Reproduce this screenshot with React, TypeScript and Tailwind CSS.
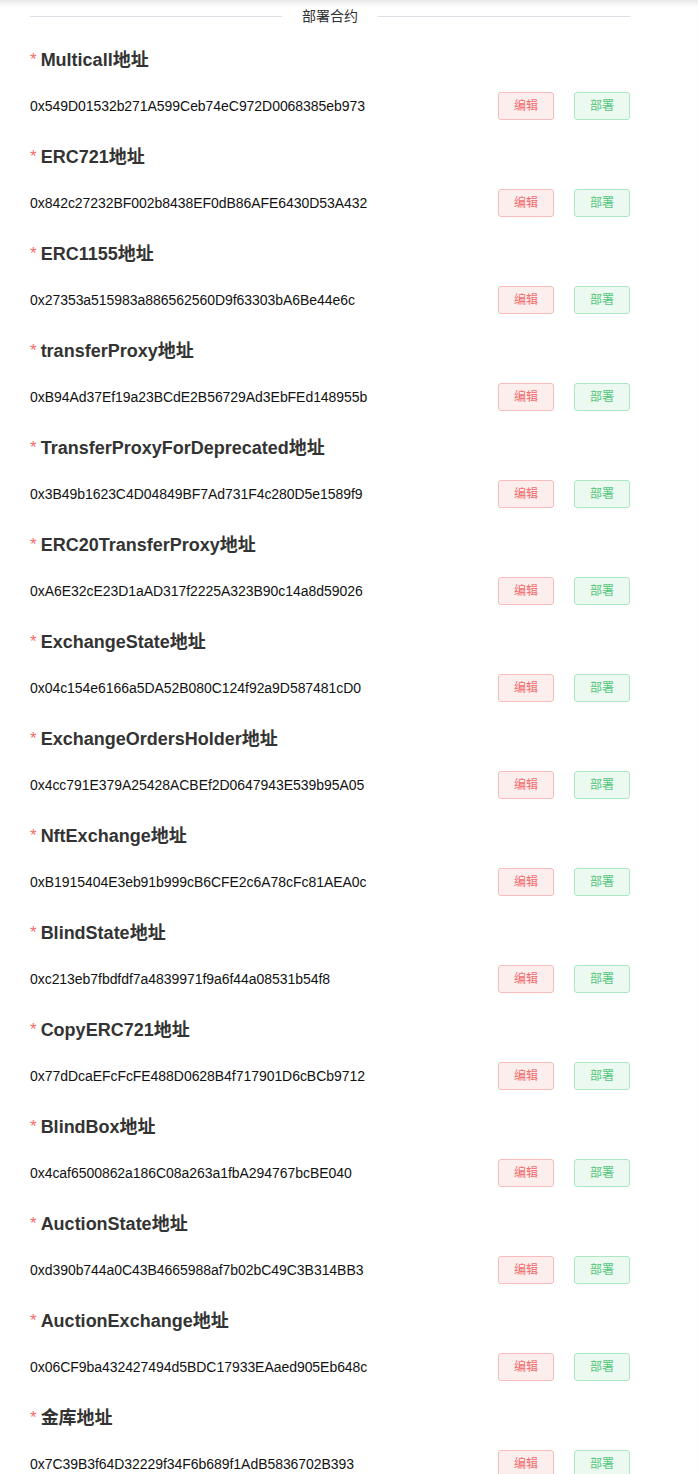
import React from "react";

const items: [string, string][] = [
  ["Multicall地址", "0x549D01532b271A599Ceb74eC972D0068385eb973"],
  ["ERC721地址", "0x842c27232BF002b8438EF0dB86AFE6430D53A432"],
  ["ERC1155地址", "0x27353a515983a886562560D9f63303bA6Be44e6c"],
  ["transferProxy地址", "0xB94Ad37Ef19a23BCdE2B56729Ad3EbFEd148955b"],
  ["TransferProxyForDeprecated地址", "0x3B49b1623C4D04849BF7Ad731F4c280D5e1589f9"],
  ["ERC20TransferProxy地址", "0xA6E32cE23D1aAD317f2225A323B90c14a8d59026"],
  ["ExchangeState地址", "0x04c154e6166a5DA52B080C124f92a9D587481cD0"],
  ["ExchangeOrdersHolder地址", "0x4cc791E379A25428ACBEf2D0647943E539b95A05"],
  ["NftExchange地址", "0xB1915404E3eb91b999cB6CFE2c6A78cFc81AEA0c"],
  ["BlindState地址", "0xc213eb7fbdfdf7a4839971f9a6f44a08531b54f8"],
  ["CopyERC721地址", "0x77dDcaEFcFcFE488D0628B4f717901D6cBCb9712"],
  ["BlindBox地址", "0x4caf6500862a186C08a263a1fbA294767bcBE040"],
  ["AuctionState地址", "0xd390b744a0C43B4665988af7b02bC49C3B314BB3"],
  ["AuctionExchange地址", "0x06CF9ba432427494d5BDC17933EAaed905Eb648c"],
  ["金库地址", "0x7C39B3f64D32229f34F6b689f1AdB5836702B393"],
];

export default function App() {
  return (
    <div
      className="min-h-[1474px] bg-white shadow-[inset_0_7px_6px_-5px_rgba(0,0,0,0.13)]"
      style={{ fontFamily: '"Liberation Sans", "Noto Sans CJK SC", sans-serif' }}
    >
      <div className="ml-[30px] w-[600px]">
        <div className="flex h-8 items-center">
          <div className="h-px flex-1 bg-[#dcdfe6]" />
          <div className="px-5 text-[14px] text-[#303133]">部署合约</div>
          <div className="h-px flex-1 bg-[#dcdfe6]" />
        </div>
        <div className="mt-4 flex flex-col">
          {items.map(([label, addr]) => (
            <div key={label} className="mb-[25px] flex flex-col">
              <div className="flex h-6 items-center">
                <span className="mr-[4px] -mt-[2px] text-[17px] leading-none text-[#f56c6c]">*</span>
                <span className="text-[18px] font-bold text-[#333333]">{label}</span>
              </div>
              <div className="mt-5 flex h-7 items-center">
                <div className="flex-1 text-[14px] tracking-[-0.05px] text-[#111111]">{addr}</div>
                <button className="h-7 w-14 rounded-[3px] border border-[#f9bcbc] bg-[#fdeeee] text-[12px] text-[#f26c6c]">
                  编辑
                </button>
                <button className="ml-5 h-7 w-14 rounded-[3px] border border-[#aee8c2] bg-[#ebf9f0] text-[12px] text-[#54c57c]">
                  部署
                </button>
              </div>
            </div>
          ))}
        </div>
      </div>
    </div>
  );
}
